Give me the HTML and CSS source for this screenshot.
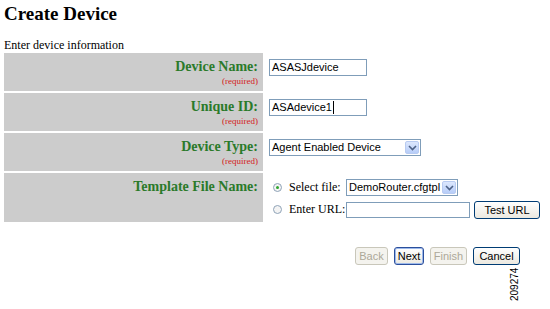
FILE: index.html
```html
<!DOCTYPE html>
<html lang="en">
<head>
    <meta charset="UTF-8">
    <title>Create Device</title>
    <link rel="stylesheet" href="styles.css">
</head>
<body>

<h1 class="page-title">Create Device</h1>
<div class="intro">Enter device information</div>

<div class="form">
    <div class="row">
        <div class="label">Device Name:<span class="req">(required)</span></div>
        <div class="value"><div class="textbox w-name">ASASJdevice</div></div>
    </div>
    <div class="row">
        <div class="label">Unique ID:<span class="req">(required)</span></div>
        <div class="value"><div class="textbox w-name">ASAdevice1<span class="caret"></span></div></div>
    </div>
    <div class="row">
        <div class="label">Device Type:<span class="req">(required)</span></div>
        <div class="value">
            <div class="dropdown w-type">
                <span class="dd-text">Agent Enabled Device</span>
                <span class="dd-btn"><svg width="9" height="6" viewBox="0 0 9 6"><path d="M1 1 L4.5 4.5 L8 1" fill="none" stroke="#4d6185" stroke-width="1.6"/></svg></span>
            </div>
        </div>
    </div>
    <div class="row tall">
        <div class="label">Template File Name:</div>
        <div class="value">
            <div class="choice">
                <span class="radio on"></span>
                <span class="choice-label">Select file:</span>
                <div class="dropdown w-file">
                    <span class="dd-text">DemoRouter.cfgtpl</span>
                    <span class="dd-btn"><svg width="9" height="6" viewBox="0 0 9 6"><path d="M1 1 L4.5 4.5 L8 1" fill="none" stroke="#4d6185" stroke-width="1.6"/></svg></span>
                </div>
            </div>
            <div class="choice">
                <span class="radio"></span>
                <span class="choice-label">Enter URL:</span>
                <div class="textbox w-url"></div>
                <span class="btn test">Test URL</span>
            </div>
        </div>
    </div>
</div>

<div class="actions">
    <span class="btn disabled w-back">Back</span>
    <span class="btn focused w-next">Next</span>
    <span class="btn disabled w-finish">Finish</span>
    <span class="btn w-cancel">Cancel</span>
</div>

<div class="fig-id">209274</div>

</body>
</html>
```

FILE: styles.css
```css
body {
    margin: 0;
    padding: 0 4px;
    width: 542px;
    height: 309px;
    background: #fff;
    font-family: "Liberation Serif", serif;
    position: relative;
    overflow: hidden;
}
.page-title {
    margin: 0;
    padding-top: 4px;
    font-size: 19px;
    font-weight: bold;
    line-height: 20px;
}
.intro {
    margin-top: 14px;
    font-size: 12px;
    line-height: 14px;
}
.form {
    display: flex;
    flex-direction: column;
    gap: 2px;
    margin-top: 1px;
}
.row {
    display: flex;
    height: 38px;
}
.row.tall {
    height: 49px;
}
.label {
    width: 254px;
    padding: 6px 5px 0 0;
    background: #cccccc;
    color: #2a7a2a;
    font-weight: bold;
    font-size: 14px;
    line-height: 16px;
    text-align: right;
}
.req {
    display: block;
    color: #d42020;
    font-weight: normal;
    font-size: 9px;
    line-height: 11px;
    margin-top: 1px;
}
.value {
    padding: 6px 0 0 6px;
    font-family: "Liberation Sans", sans-serif;
    font-size: 11px;
}
.textbox {
    box-sizing: border-box;
    height: 17px;
    border: 1px solid #7f9db9;
    padding: 1px 2px;
    line-height: 13px;
    background: #fff;
    position: relative;
}
.w-name { width: 98px; }
.w-url { width: 124px; height: 16px; }
.caret {
    display: inline-block;
    width: 1px;
    height: 13px;
    background: #000;
    vertical-align: top;
    margin-left: 1px;
}
.dropdown {
    box-sizing: border-box;
    display: flex;
    justify-content: space-between;
    align-items: center;
    height: 17px;
    border: 1px solid #7f9db9;
    background: #fff;
    padding-left: 2px;
}
.w-type { width: 152px; }
.w-file { width: 112px; }
.dd-text { line-height: 13px; }
.dd-btn {
    display: flex;
    align-items: center;
    justify-content: center;
    width: 14px;
    height: 13px;
    margin-right: 1px;
    border: 1px solid #b8cbf1;
    border-radius: 2px;
    box-sizing: border-box;
    background: linear-gradient(#dce7fd, #b7cdf8);
}
.choice {
    display: flex;
    align-items: center;
    height: 17px;
    margin-bottom: 5px;
}
.radio {
    box-sizing: border-box;
    width: 9px;
    height: 9px;
    margin: 0 7px 0 4px;
    border: 1px solid #8fa3b8;
    border-radius: 50%;
    background: #f4f4f4;
    position: relative;
}
.radio.on::after {
    content: "";
    position: absolute;
    left: 2px;
    top: 2px;
    width: 3px;
    height: 3px;
    border-radius: 50%;
    background: #2fa52f;
}
.choice-label {
    font-family: "Liberation Serif", serif;
    font-size: 12px;
    width: 57px;
    white-space: nowrap;
    flex-shrink: 0;
}
.btn {
    display: inline-block;
    box-sizing: border-box;
    height: 18px;
    padding: 0;
    border: 1px solid #003c74;
    border-radius: 3px;
    background: linear-gradient(#ffffff, #ece9e0);
    font-family: "Liberation Sans", sans-serif;
    font-size: 11px;
    line-height: 16px;
    text-align: center;
    color: #000;
    white-space: nowrap;
}
.btn.test {
    margin-left: 4px;
    width: 66px;
}
.w-back { width: 33px; }
.w-next { width: 30px; }
.w-finish { width: 37px; }
.w-cancel { width: 47px; }
.btn.disabled {
    border-color: #c9c7ba;
    color: #aca899;
    background: #f4f3ee;
}
.btn.focused {
    border-color: #2b4f9c;
    box-shadow: inset 0 0 0 1px #9db9eb;
}
.actions {
    display: flex;
    justify-content: flex-end;
    gap: 6px;
    margin-top: 25px;
    padding-right: 26px;
}
.fig-id {
    position: absolute;
    left: 500px;
    top: 281px;
    width: 30px;
    text-align: center;
    transform: rotate(-90deg);
    font-family: "Liberation Sans", sans-serif;
    font-size: 10px;
    line-height: 10px;
}
```
